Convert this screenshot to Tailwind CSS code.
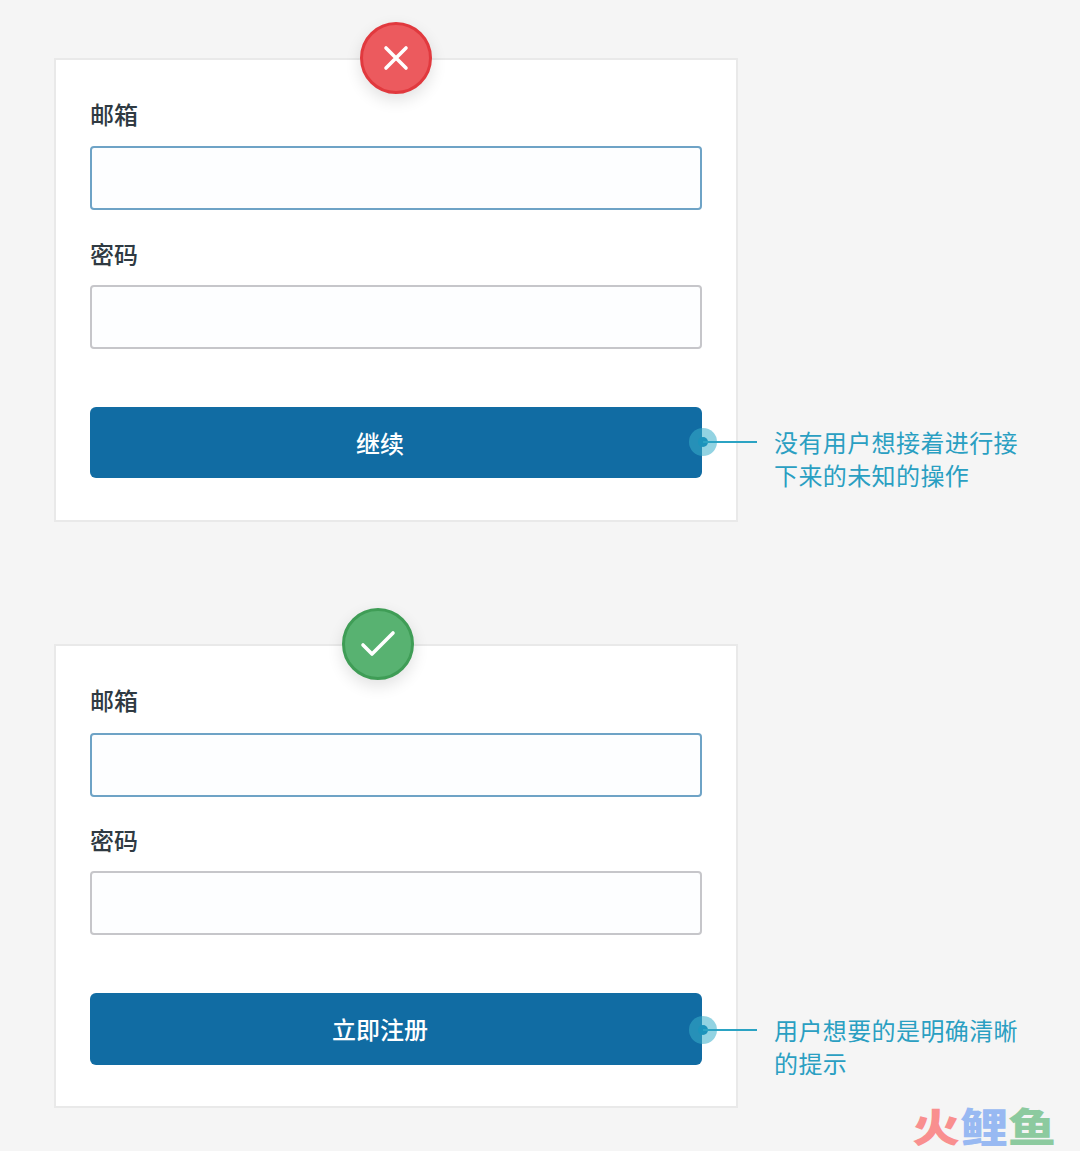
<!DOCTYPE html>
<html lang="zh">
<head>
<meta charset="utf-8">
<script src="https://cdn.jsdelivr.net/npm/@tailwindcss/browser@4"></script>
</head>
<body class="bg-[#f5f5f5] font-['Noto_Sans_CJK_SC','Noto_Sans',sans-serif]">
<main class="relative w-[1080px] h-[1151px] overflow-hidden pt-[58px] pl-[54px]">

  <section class="relative w-[684px] h-[464px] bg-white border-2 border-[#e9e9e9] pl-[34px] pt-[37px]">
    <div class="absolute left-[304px] top-[-38px] w-[72px] h-[72px] rounded-full bg-[#ec5a5e] border-[3px] border-[#e1393e] shadow-[0_6px_16px_rgba(0,0,0,0.12)] flex items-center justify-center">
      <svg width="28" height="28" viewBox="0 0 28 28" fill="none" stroke="#fff" stroke-width="3.6" stroke-linecap="round"><path d="M4 4 24 24M24 4 4 24"/></svg>
    </div>
    <label class="block text-[24px] leading-[34px] font-medium text-[#2f3a42] mb-[15px]">邮箱</label>
    <div class="w-[612px] h-[64px] bg-[#fdfeff] border-2 border-[#6ea3c6] rounded-[4px]"></div>
    <label class="block mt-[27px] text-[24px] leading-[34px] font-medium text-[#2f3a42] mb-[14px]">密码</label>
    <div class="w-[612px] h-[64px] bg-[#fdfeff] border-2 border-[#c6c6ca] rounded-[4px]"></div>
    <button class="block mt-[58px] w-[612px] h-[71px] bg-[#116ca3] rounded-[6px] pr-[32px] text-[24px] font-medium text-white">继续</button>
    <div class="absolute left-[633px] top-[368px] w-[28px] h-[28px] rounded-full bg-[#39aecb]/55 flex items-center justify-center">
      <div class="w-[10px] h-[10px] rounded-full bg-[#1c93bb]"></div>
    </div>
    <div class="absolute left-[647px] top-[381px] w-[54px] h-[2px] bg-[#2ba3c3]"></div>
    <p class="absolute left-[718px] top-[365px] w-[260px] text-[24px] leading-[33px] tracking-[0.4px] font-normal text-[#2a9fc2]">没有用户想接着进行接<br>下来的未知的操作</p>
  </section>

  <section class="relative mt-[122px] w-[684px] h-[464px] bg-white border-2 border-[#e9e9e9] pl-[34px] pt-[37px]">
    <div class="absolute left-[286px] top-[-38px] w-[72px] h-[72px] rounded-full bg-[#58b271] border-[3px] border-[#3f9d56] shadow-[0_6px_16px_rgba(0,0,0,0.12)] flex items-center justify-center">
      <svg width="36" height="28" viewBox="0 0 36 28" fill="none" stroke="#fff" stroke-width="3.6" stroke-linecap="round" stroke-linejoin="round"><path d="M3 15 12 24 33 3"/></svg>
    </div>
    <label class="block text-[24px] leading-[34px] font-medium text-[#2f3a42] mb-[16px]">邮箱</label>
    <div class="w-[612px] h-[64px] bg-[#fdfeff] border-2 border-[#6ea3c6] rounded-[4px]"></div>
    <label class="block mt-[26px] text-[24px] leading-[34px] font-medium text-[#2f3a42] mb-[14px]">密码</label>
    <div class="w-[612px] h-[64px] bg-[#fdfeff] border-2 border-[#c6c6ca] rounded-[4px]"></div>
    <button class="block mt-[58px] w-[612px] h-[72px] bg-[#116ca3] rounded-[6px] pr-[32px] text-[24px] font-medium text-white">立即注册</button>
    <div class="absolute left-[633px] top-[370px] w-[28px] h-[28px] rounded-full bg-[#39aecb]/55 flex items-center justify-center">
      <div class="w-[10px] h-[10px] rounded-full bg-[#1c93bb]"></div>
    </div>
    <div class="absolute left-[647px] top-[383px] w-[54px] h-[2px] bg-[#2ba3c3]"></div>
    <p class="absolute left-[718px] top-[367px] w-[260px] text-[24px] leading-[33px] tracking-[0.4px] font-normal text-[#2a9fc2]">用户想要的是明确清晰<br>的提示</p>
  </section>

  <div class="absolute left-[912px] top-[1104px] flex origin-top scale-y-[0.82] text-[48px] leading-[50px] font-black">
    <span class="text-[#f98f8f]">火</span><span class="text-[#98b9f2]">鲤</span><span class="text-[#8cca9f]">鱼</span>
  </div>
</main>
</body>
</html>
